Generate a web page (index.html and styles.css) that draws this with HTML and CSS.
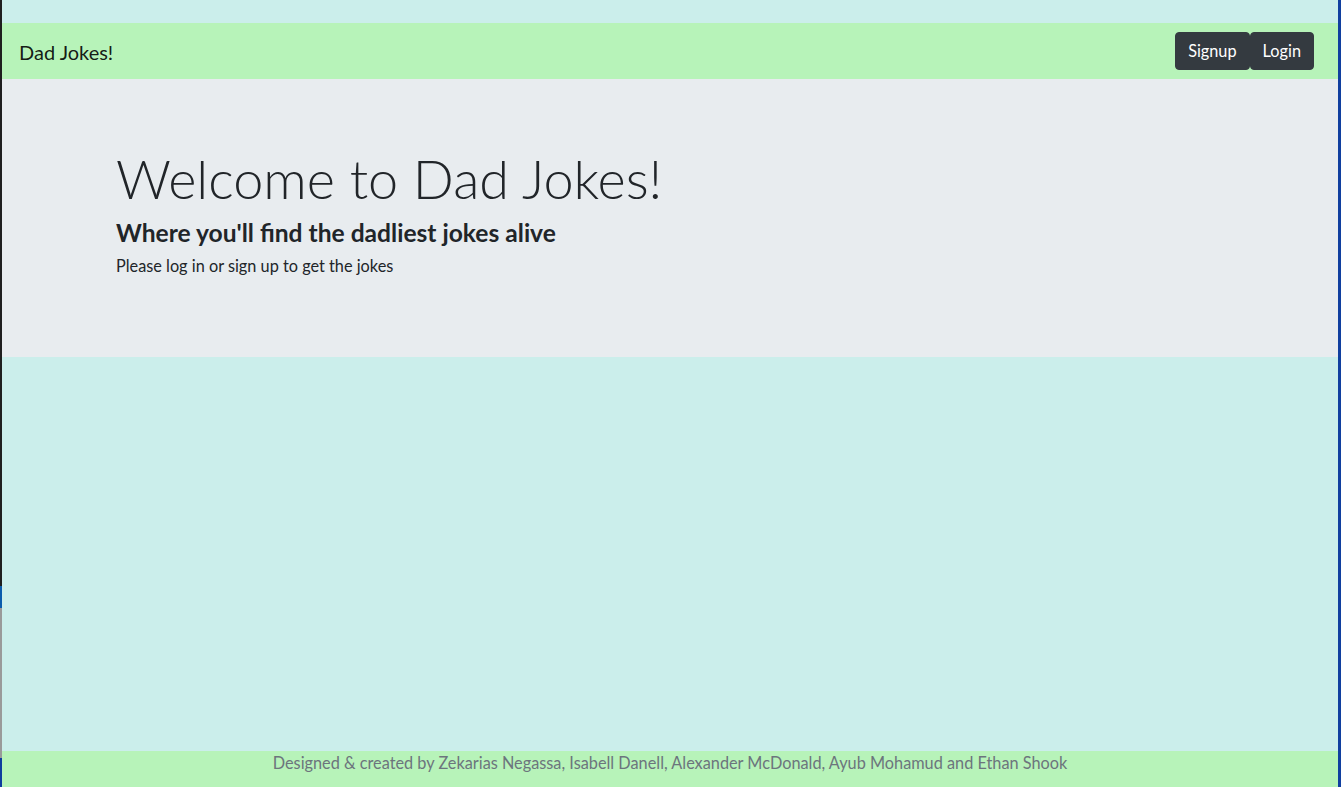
FILE: index.html
```html
<!DOCTYPE html>
<html lang="en">
<head>
<meta charset="utf-8">
<title>Dad Jokes!</title>
<link rel="stylesheet" href="styles.css">
</head>
<body>
<div class="frame">
  <div class="edge-left"></div>
  <div class="page">
    <nav class="navbar">
      <a class="brand" href="#">Dad Jokes!</a>
      <div class="nav-actions">
        <button class="btn">Signup</button>
        <button class="btn">Login</button>
      </div>
    </nav>
    <header class="jumbotron">
      <h1 class="display">Welcome to Dad Jokes!</h1>
      <h4 class="lead-title">Where you'll find the dadliest jokes alive</h4>
      <p class="note">Please log in or sign up to get the jokes</p>
    </header>
    <main class="content"></main>
    <footer class="footer">Designed &amp; created by Zekarias Negassa, Isabell Danell, Alexander McDonald, Ayub Mohamud and Ethan Shook</footer>
  </div>
  <div class="edge-right"></div>
</div>
</body>
</html>
```
FILE: styles.css
```css
html, body {
  margin: 0;
  padding: 0;
  height: 100%;
}
body {
  font-family: Lato, "Open Sans", sans-serif;
  color: #212529;
  background: #cbeeeb;
}
.frame {
  display: flex;
  height: 787px;
}
.edge-left {
  width: 2px;
  flex: none;
  background: linear-gradient(to bottom, #1f1f1f 0, #1f1f1f 586px, #0b5cad 586px, #0b5cad 608px, #9a9a9a 608px, #9a9a9a 758px, #0f3d9e 758px, #0f3d9e 787px);
}
.edge-right {
  width: 3px;
  flex: none;
  background: #103f9f;
}
.page {
  flex: 1;
  display: flex;
  flex-direction: column;
  padding-top: 23px;
  background: #cbeeeb;
}
.navbar {
  display: flex;
  align-items: center;
  justify-content: space-between;
  height: 56px;
  padding: 0 24px 0 17px;
  background: #b7f3b9;
  box-sizing: border-box;
}
.brand {
  font-size: 20px;
  line-height: 30px;
  color: rgba(0, 0, 0, 0.9);
  text-decoration: none;
  padding-top: 1px;
}
.nav-actions {
  display: flex;
}
.btn {
  font-family: Lato, "Open Sans", sans-serif;
  font-size: 16.3px;
  line-height: 24px;
  color: #fff;
  background: #343a40;
  border: 1px solid #343a40;
  border-radius: 4px;
  padding: 6px 12px;
  height: 38px;
  cursor: pointer;
}
.btn + .btn {
  margin-left: 0;
}
.jumbotron {
  background: #e8ecef;
  padding: 64px 114px 63px;
  height: 278px;
  box-sizing: border-box;
}
.display {
  margin: 0 0 4px;
  font-size: 54px;
  font-weight: 300;
  line-height: 72px;
  color: #212529;
}
.lead-title {
  margin: 0 0 7px;
  font-size: 24.6px;
  font-weight: 700;
  line-height: 28px;
}
.note {
  margin: 0;
  font-size: 16.3px;
  line-height: 24px;
}
.content {
  flex: 1;
}
.footer {
  height: 36px;
  box-sizing: border-box;
  background: #b7f3b9;
  color: #6c757d;
  text-align: center;
  font-size: 16.3px;
  line-height: 24px;
  padding-bottom: 12px;
}
```
